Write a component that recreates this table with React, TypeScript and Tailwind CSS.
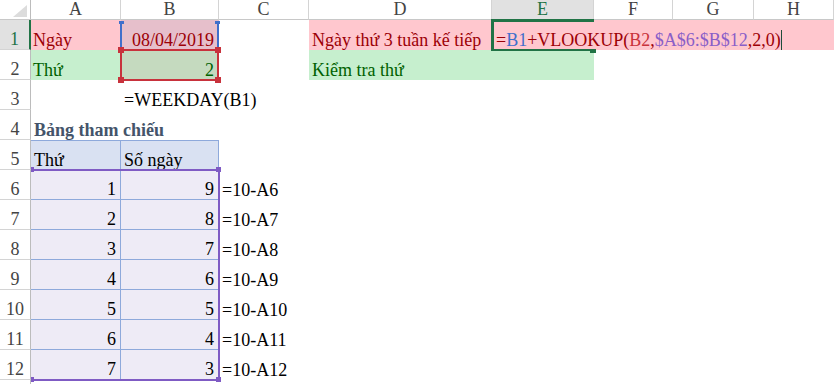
import React from "react";

function RH({ n, sel }: { n?: number; sel?: boolean }) {
  return sel ? (
    <div className="flex items-end justify-center bg-[#e1e1e1] text-[#217346] border-r-2 border-r-[#217346] border-b border-b-[#d4d4d4]">
      {n}
    </div>
  ) : (
    <div className="flex items-end justify-center bg-white text-[#444444] border-r border-r-[#bcbcbc] border-b border-b-[#d4d4d4]">
      {n}
    </div>
  );
}

function ColHead({ l, sel }: { l: string; sel?: boolean }) {
  return sel ? (
    <div className="flex items-end justify-center bg-[#e1e1e1] text-[#217346] border-r border-r-[#d4d4d4] border-b border-b-[#217346]">
      {l}
    </div>
  ) : (
    <div className="flex items-end justify-center bg-white text-[#444444] border-r border-r-[#d4d4d4] border-b border-b-[#c8c8c8]">
      {l}
    </div>
  );
}

function Empty({ count }: { count: number }) {
  return (
    <>
      {Array.from({ length: count }).map((_, i) => (
        <div key={i} />
      ))}
    </>
  );
}

export default function App() {
  const rows = [1, 2, 3, 4, 5, 6, 7];
  return (
    <div className="w-[836px] h-[384px] overflow-hidden bg-white text-[18px] leading-[20px] text-black font-['Liberation_Serif','Times_New_Roman',serif]">
      <div className="relative grid grid-cols-[31px_90px_98px_90px_183px_102px_79px_81px_80px] grid-rows-[20px_repeat(13,30px)]">
        {/* header row */}
        <div className="flex items-end justify-end pr-[3px] pb-[2px] bg-white border-r border-r-[#bcbcbc] border-b border-b-[#c8c8c8]">
          <svg width="14" height="12" viewBox="0 0 14 12">
            <polygon points="14,0 14,12 0,12" fill="#dcdcdc" />
          </svg>
        </div>
        <ColHead l="A" />
        <ColHead l="B" />
        <ColHead l="C" />
        <ColHead l="D" />
        <ColHead l="E" sel />
        <ColHead l="F" />
        <ColHead l="G" />
        <ColHead l="H" />

        {/* row 1 */}
        <RH n={1} sel />
        <div className="flex items-end pl-[2px] bg-[#ffc7ce] text-[#9c0006]">Ngày</div>
        <div className="flex items-end justify-end pr-[5px] bg-[#e6bfcb] text-[#9c0006]">08/04/2019</div>
        <div />
        <div className="flex items-end pl-[3px] bg-[#ffc7ce] text-[#9c0006] whitespace-nowrap">
          Ngày thứ 3 tuần kế tiếp
        </div>
        <div className="col-span-4 flex items-end pl-[4px] bg-[#ffc7ce] text-[#9c0006] whitespace-nowrap">
          <span>=</span>
          <span className="text-[#3f6fcb]">B1</span>
          <span>+VLOOKUP(</span>
          <span className="text-[#c8323c]">B2</span>
          <span>,</span>
          <span className="text-[#8a5fc8]">$A$6:$B$12</span>
          <span>,2,0)</span>
          <span className="inline-block w-px h-[20px] bg-[#1e4d3a]" />
        </div>

        {/* row 2 */}
        <RH n={2} />
        <div className="flex items-end pl-[2px] bg-[#c6efce] text-[#006100]">Thứ</div>
        <div className="flex items-end justify-end pr-[5px] bg-[#c5dabf] text-[#006100]">2</div>
        <div />
        <div className="col-span-2 flex items-end pl-[3px] bg-[#c6efce] text-[#006100] whitespace-nowrap">
          Kiểm tra thứ
        </div>
        <Empty count={3} />

        {/* row 3 */}
        <RH n={3} />
        <div />
        <div className="flex items-end pl-[3px] whitespace-nowrap">=WEEKDAY(B1)</div>
        <Empty count={6} />

        {/* row 4 */}
        <RH n={4} />
        <div className="flex items-end pl-[3px] whitespace-nowrap font-bold text-[#44546a]">Bảng tham chiếu</div>
        <Empty count={7} />

        {/* row 5 */}
        <RH n={5} />
        <div className="flex items-end pl-[3px] bg-[#d9e1f2] border-t border-r border-[#8ea9db]">Thứ</div>
        <div className="flex items-end pl-[3px] bg-[#d9e1f2] border-t border-r border-[#8ea9db] whitespace-nowrap">Số ngày</div>
        <Empty count={6} />

        {rows.map((n) => (
          <React.Fragment key={n}>
            <RH n={n + 5} />
            <div className="flex items-end justify-end pr-[4px] bg-[#eeebf6] border-r border-b border-[#8ea9db]">{n}</div>
            <div className="flex items-end justify-end pr-[5px] bg-[#eeebf6] border-b border-[#8ea9db]">{10 - n}</div>
            <div className="flex items-end pl-[3px] whitespace-nowrap">=10-A{n + 5}</div>
            <Empty count={5} />
          </React.Fragment>
        ))}

        {/* row 13 (only its top edge is visible) */}
        <RH />
        <Empty count={8} />

        {/* B1 reference (blue) */}
        <div className="absolute left-[120px] top-[21px] w-[2px] h-[29px] bg-[#3f6fcb]" />
        <div className="absolute left-[217px] top-[21px] w-[2px] h-[29px] bg-[#3f6fcb]" />
        <div className="absolute left-[119px] top-[21px] w-[5px] h-[3px] bg-[#3f6fcb]" />
        <div className="absolute left-[215px] top-[21px] w-[5px] h-[3px] bg-[#3f6fcb]" />

        {/* B2 reference (red) */}
        <div className="absolute left-[120px] top-[49px] w-[99px] h-[2px] bg-[#c8323c]" />
        <div className="absolute left-[120px] top-[79px] w-[99px] h-[2px] bg-[#c8323c]" />
        <div className="absolute left-[120px] top-[49px] w-[2px] h-[32px] bg-[#c8323c]" />
        <div className="absolute left-[217px] top-[49px] w-[2px] h-[32px] bg-[#c8323c]" />
        <div className="absolute left-[118px] top-[47px] w-[6px] h-[6px] bg-[#c8323c]" />
        <div className="absolute left-[215px] top-[47px] w-[6px] h-[6px] bg-[#c8323c]" />
        <div className="absolute left-[118px] top-[77px] w-[6px] h-[6px] bg-[#c8323c]" />
        <div className="absolute left-[215px] top-[77px] w-[6px] h-[6px] bg-[#c8323c]" />

        {/* A6:B12 reference (purple) */}
        <div className="absolute left-[31px] top-[169px] w-[189px] h-[2px] bg-[#7f5bc4]" />
        <div className="absolute left-[218px] top-[169px] w-[2px] h-[212px] bg-[#7f5bc4]" />
        <div className="absolute left-[31px] top-[379px] w-[189px] h-[2px] bg-[#7f5bc4]" />
        <div className="absolute left-[31px] top-[167px] w-[3px] h-[5px] bg-[#7f5bc4]" />
        <div className="absolute left-[216px] top-[167px] w-[5px] h-[5px] bg-[#7f5bc4]" />
        <div className="absolute left-[31px] top-[377px] w-[3px] h-[5px] bg-[#7f5bc4]" />
        <div className="absolute left-[216px] top-[377px] w-[5px] h-[5px] bg-[#7f5bc4]" />

        {/* E1 active cell selection */}
        <div className="absolute left-[491px] top-[19px] w-[103px] h-[3px] bg-[#217346]" />
        <div className="absolute left-[491px] top-[19px] w-[3px] h-[32px] bg-[#217346]" />
        <div className="absolute left-[491px] top-[49px] w-[99px] h-[2px] bg-[#217346]" />
        <div className="absolute left-[590px] top-[49px] w-[6px] h-[4px] bg-[#217346]" />
      </div>
    </div>
  );
}
